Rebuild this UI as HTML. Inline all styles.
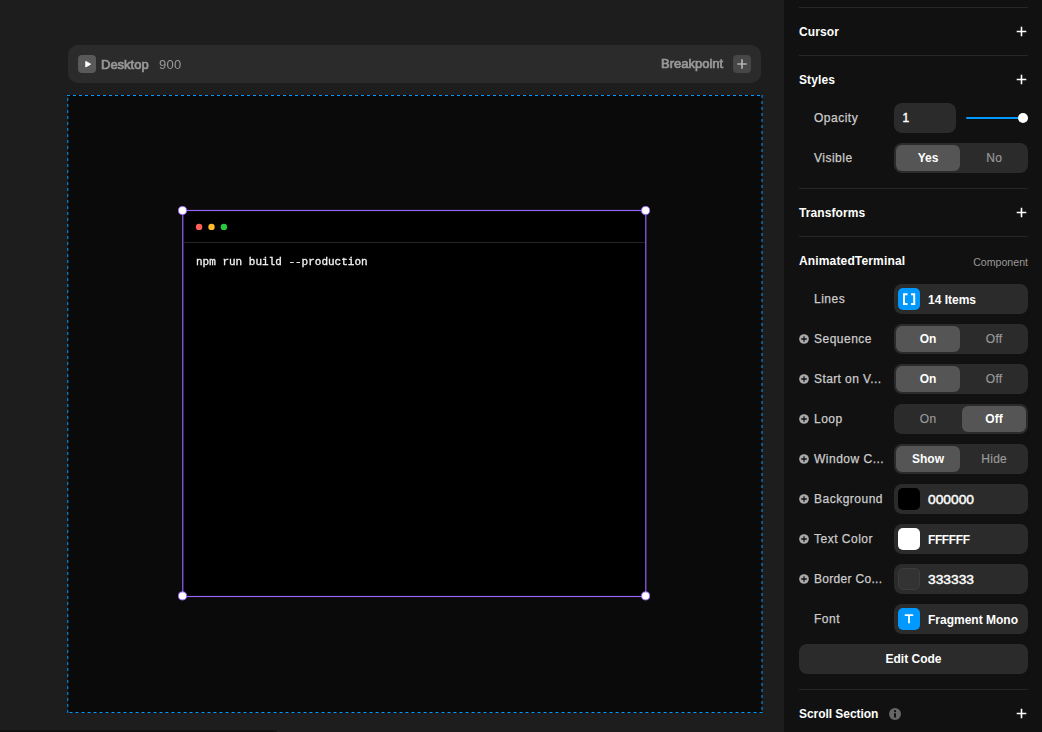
<!DOCTYPE html>
<html>
<head>
<meta charset="utf-8">
<style>
*{box-sizing:border-box;margin:0;padding:0}
html,body{width:1042px;height:732px;overflow:hidden;background:#1d1d1d;font-family:"Liberation Sans",sans-serif;}
body{position:relative}
.abs{position:absolute}
#topbar{left:67.5px;top:45px;width:693.7px;height:38px;background:#2b2b2b;border-radius:10px}
.ibox{width:18px;height:18px;border-radius:4px;background:#595959}
.tb-text{will-change:transform;font-size:13px;line-height:16px;color:#999;white-space:nowrap;-webkit-text-stroke:0.7px #999}
#frame{left:67.5px;top:95px;width:694.5px;height:618px;background:#0a0a0a}
#term{left:183px;top:211px;width:463px;height:386px;background:#000}
.handle{width:9px;height:9px;border-radius:50%;background:#fff;border:1px solid #8f5fe0}
.dot{width:6.4px;height:6.4px;border-radius:50%}
#side{left:784px;top:0;width:258px;height:732px;background:#111}
.div{left:15px;width:229px;height:1px;background:#262626}
.title{left:15px;font-size:12px;font-weight:bold;color:#fff;line-height:16px;white-space:nowrap;letter-spacing:0.1px}
.label{left:30px;font-size:12px;color:#ccc;line-height:16px;white-space:nowrap;letter-spacing:0.5px;-webkit-text-stroke:0.25px #ccc}
.ctl{left:110px;width:134px;height:30px;border-radius:8px;background:#2b2b2b}
.seg{top:2px;width:64px;height:26px;border-radius:6px;background:#555}
.segt{top:7px;width:64px;text-align:center;font-size:12px;line-height:16px;color:#999;white-space:nowrap;letter-spacing:0.3px;text-indent:0.3px;-webkit-text-stroke:0.2px #999}
.segt.on{color:#fff;font-weight:bold;letter-spacing:0;text-indent:0;-webkit-text-stroke:0}
.sw{left:4px;top:4px;width:22px;height:22px;border-radius:5px}
.val{left:34px;top:8px;font-size:12px;line-height:16px;color:#fff;white-space:nowrap;font-weight:bold}
.plus{left:232px;width:10px;height:10px}
.pc{left:15px;width:9px;height:9px}
</style>
</head>
<body>
<div class="abs" id="topbar">
  <div class="abs ibox" style="left:10px;top:10px"><svg width="18" height="18" viewBox="0 0 18 18"><path d="M7.8 6.4 L12.6 9.15 L7.8 11.9 Z" fill="#fff" stroke="#fff" stroke-width="1" stroke-linejoin="round"/></svg></div>
  <div class="abs tb-text" style="left:33px;top:12px">Desktop</div>
  <div class="abs tb-text" style="left:91px;top:12px;-webkit-text-stroke:0;letter-spacing:0.3px">900</div>
  <div class="abs tb-text" style="left:593px;top:11px">Breakpoint</div>
  <div class="abs ibox" style="left:665.4px;top:10px;background:#474747"><svg width="18" height="18" viewBox="0 0 18 18"><path d="M9 4.3V13.7M4.3 9H13.7" stroke="#b0b0b0" stroke-width="1.7" fill="none"/></svg></div>
</div>
<div class="abs" id="frame"></div>
<svg class="abs" style="left:0;top:0" width="784" height="732" fill="none" stroke="#0099ff" stroke-width="1" stroke-dasharray="3 3">
  <path d="M67 95.5H762.5"/>
  <path d="M762 95V713"/>
  <path d="M762.5 712.5H67"/>
  <path d="M67.8 713V95"/>
</svg>
<div class="abs" id="term">
  <div class="abs" style="left:1px;top:31px;width:461px;height:1px;background:#252525"></div>
  <div class="abs" style="left:13px;top:44px;font-family:'Liberation Mono',monospace;font-size:11px;line-height:14px;color:#f2f2f2;white-space:pre;-webkit-text-stroke:0.3px #f2f2f2;transform:translateY(0.4px);will-change:transform">npm run build --production</div>
</div>
<svg class="abs" style="left:0;top:0" width="784" height="732">
  <rect x="182.8" y="210.5" width="463" height="386" fill="none" stroke="#9966ff" stroke-width="1.15"/>
  <circle cx="199.1" cy="226.9" r="3.2" fill="#ff5f57"/><circle cx="211.5" cy="226.9" r="3.2" fill="#febc2e"/><circle cx="223.9" cy="226.9" r="3.2" fill="#28c840"/>
  <g fill="#fff" stroke="#9966ff" stroke-width="1">
    <circle cx="182.5" cy="210.5" r="4.05"/><circle cx="645.6" cy="210.5" r="4.05"/>
    <circle cx="182.5" cy="595.9" r="4.05"/><circle cx="645.6" cy="595.9" r="4.05"/>
  </g>
</svg>

<div class="abs" id="side">
  <div class="abs div" style="top:7px"></div>
  <div class="abs title" style="top:24px">Cursor</div>
  <svg class="abs" style="left:232.3px;top:26.2px" width="11" height="11" viewBox="0 0 11 11"><path d="M5.5 0.7V10.3M0.7 5.5H10.3" stroke="#fff" stroke-width="1.6" fill="none"/></svg>
  <div class="abs div" style="top:55px"></div>
  <div class="abs title" style="top:72px">Styles</div>
  <svg class="abs" style="left:232.3px;top:74.2px" width="11" height="11" viewBox="0 0 11 11"><path d="M5.5 0.7V10.3M0.7 5.5H10.3" stroke="#fff" stroke-width="1.6" fill="none"/></svg>
  <div class="abs label" style="top:110px">Opacity</div>
  <div class="abs ctl" style="top:103px;width:62px"><div class="abs val" style="left:8.5px;top:7px;font-weight:normal;-webkit-text-stroke:0.4px #fff">1</div></div>
  <div class="abs" style="left:182px;top:117px;width:58px;height:2px;background:#0099ff;border-radius:1px"></div>
  <div class="abs" style="left:234px;top:113px;width:10px;height:10px;border-radius:50%;background:#fff"></div>
  <div class="abs label" style="top:150px">Visible</div>
  <div class="abs ctl" style="top:143px"><div class="abs seg" style="left:2px"></div><div class="abs segt on" style="left:2px">Yes</div><div class="abs segt" style="left:68px">No</div></div>
  <div class="abs div" style="top:188px"></div>
  <div class="abs title" style="top:205px">Transforms</div>
  <svg class="abs" style="left:232.3px;top:207.2px" width="11" height="11" viewBox="0 0 11 11"><path d="M5.5 0.7V10.3M0.7 5.5H10.3" stroke="#fff" stroke-width="1.6" fill="none"/></svg>
  <div class="abs div" style="top:236px"></div>
  <div class="abs title" style="top:253px;letter-spacing:0.15px">AnimatedTerminal</div>
  <div class="abs" style="right:14px;top:256px;font-size:10.6px;line-height:13px;color:#999">Component</div>

  <div class="abs label" style="top:291px">Lines</div>
  <div class="abs ctl" style="top:284px"><div class="abs sw" style="background:#0099ff"><svg width="22" height="22" viewBox="0 0 22 22" style="display:block"><path d="M9.5 6.2H6V15.9H9.5M13.1 6.2H16.2V15.9H13.1" stroke="#fff" stroke-width="2" fill="none"/></svg></div><div class="abs val">14 Items</div></div>

  <div class="abs label" style="top:331px">Sequence</div>
  <svg class="abs" style="left:14.5px;top:333.7px" width="10" height="10" viewBox="0 0 10 10"><circle cx="5" cy="5" r="4.85" fill="#aaa"/><path d="M5 2.2V7.8M2.2 5H7.8" stroke="#111" stroke-width="1.3" fill="none"/></svg>
  <div class="abs ctl" style="top:324px"><div class="abs seg" style="left:2px"></div><div class="abs segt on" style="left:2px">On</div><div class="abs segt" style="left:68px">Off</div></div>

  <div class="abs label" style="top:371px;letter-spacing:0.4px">Start on V...</div>
  <svg class="abs" style="left:14.5px;top:373.7px" width="10" height="10" viewBox="0 0 10 10"><circle cx="5" cy="5" r="4.85" fill="#aaa"/><path d="M5 2.2V7.8M2.2 5H7.8" stroke="#111" stroke-width="1.3" fill="none"/></svg>
  <div class="abs ctl" style="top:364px"><div class="abs seg" style="left:2px"></div><div class="abs segt on" style="left:2px">On</div><div class="abs segt" style="left:68px">Off</div></div>

  <div class="abs label" style="top:411px">Loop</div>
  <svg class="abs" style="left:14.5px;top:413.7px" width="10" height="10" viewBox="0 0 10 10"><circle cx="5" cy="5" r="4.85" fill="#aaa"/><path d="M5 2.2V7.8M2.2 5H7.8" stroke="#111" stroke-width="1.3" fill="none"/></svg>
  <div class="abs ctl" style="top:404px"><div class="abs seg" style="left:68px"></div><div class="abs segt" style="left:2px">On</div><div class="abs segt on" style="left:68px">Off</div></div>

  <div class="abs label" style="top:451px">Window C...</div>
  <svg class="abs" style="left:14.5px;top:453.7px" width="10" height="10" viewBox="0 0 10 10"><circle cx="5" cy="5" r="4.85" fill="#aaa"/><path d="M5 2.2V7.8M2.2 5H7.8" stroke="#111" stroke-width="1.3" fill="none"/></svg>
  <div class="abs ctl" style="top:444px"><div class="abs seg" style="left:2px"></div><div class="abs segt on" style="left:2px">Show</div><div class="abs segt" style="left:68px">Hide</div></div>

  <div class="abs label" style="top:491px">Background</div>
  <svg class="abs" style="left:14.5px;top:493.7px" width="10" height="10" viewBox="0 0 10 10"><circle cx="5" cy="5" r="4.85" fill="#aaa"/><path d="M5 2.2V7.8M2.2 5H7.8" stroke="#111" stroke-width="1.3" fill="none"/></svg>
  <div class="abs ctl" style="top:484px"><div class="abs sw" style="background:#000"></div><div class="abs val" style="transform:scaleX(1.15);transform-origin:0 0;font-weight:normal;-webkit-text-stroke:0.4px #fff">000000</div></div>

  <div class="abs label" style="top:531px">Text Color</div>
  <svg class="abs" style="left:14.5px;top:533.7px" width="10" height="10" viewBox="0 0 10 10"><circle cx="5" cy="5" r="4.85" fill="#aaa"/><path d="M5 2.2V7.8M2.2 5H7.8" stroke="#111" stroke-width="1.3" fill="none"/></svg>
  <div class="abs ctl" style="top:524px"><div class="abs sw" style="background:#fff"></div><div class="abs val" style="letter-spacing:-0.4px">FFFFFF</div></div>

  <div class="abs label" style="top:571px;letter-spacing:0.3px">Border Co...</div>
  <svg class="abs" style="left:14.5px;top:573.7px" width="10" height="10" viewBox="0 0 10 10"><circle cx="5" cy="5" r="4.85" fill="#aaa"/><path d="M5 2.2V7.8M2.2 5H7.8" stroke="#111" stroke-width="1.3" fill="none"/></svg>
  <div class="abs ctl" style="top:564px"><div class="abs sw" style="background:#333;border:1px solid #3d3d3d"></div><div class="abs val" style="transform:scaleX(1.15);transform-origin:0 0;font-weight:normal;-webkit-text-stroke:0.4px #fff">333333</div></div>

  <div class="abs label" style="top:611px">Font</div>
  <div class="abs ctl" style="top:604px"><div class="abs sw" style="background:#0099ff"><svg width="22" height="22" viewBox="0 0 22 22" style="display:block"><path d="M7.5 7.2H14.5M11 7.2V14.6" stroke="#fff" stroke-width="1.8" stroke-linecap="round" fill="none"/></svg></div><div class="abs val">Fragment Mono</div></div>

  <div class="abs ctl" style="left:15px;top:644px;width:229px;text-align:center;font-size:12px;font-weight:bold;color:#fff;line-height:30px">Edit Code</div>
  <div class="abs div" style="top:689px"></div>
  <div class="abs title" style="top:706px;letter-spacing:-0.05px">Scroll Section</div>
  <svg class="abs" style="left:232.3px;top:708.2px" width="11" height="11" viewBox="0 0 11 11"><path d="M5.5 0.7V10.3M0.7 5.5H10.3" stroke="#fff" stroke-width="1.6" fill="none"/></svg>
  <svg class="abs" style="left:105px;top:708px" width="12" height="12" viewBox="0 0 12 12"><circle cx="6" cy="6" r="6" fill="#666"/><circle cx="6" cy="3.2" r="1.1" fill="#111"/><path d="M6 5.2V9.4" stroke="#111" stroke-width="2" fill="none"/></svg>
</div>
<div class="abs" style="left:0;top:729.8px;width:282px;height:20px;background:#111;border-top-right-radius:10px"></div>
</body>
</html>
